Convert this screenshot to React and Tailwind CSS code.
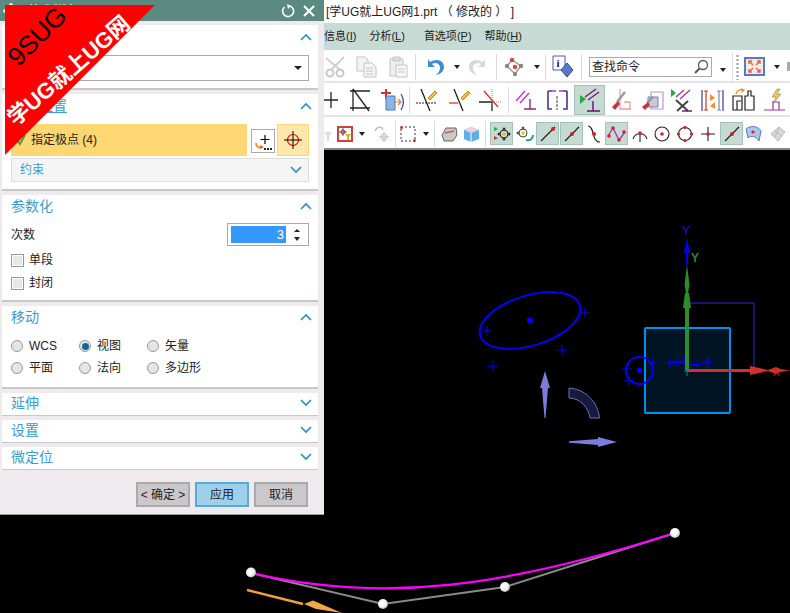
import React from 'react'

const Ico = ({ w = 22, h = 22, className = '', children }) => (
  <svg width={w} height={h} viewBox={`0 0 ${w} ${h}`} className={`shrink-0 ${className}`} fill="none">
    {children}
  </svg>
)

const Caret = ({ className = '' }) => (
  <span className={`shrink-0 w-0 h-0 border-x-[3px] border-x-transparent border-t-[4px] border-t-[#222] ${className}`} />
)

const Sep = ({ className = '' }) => <span className={`shrink-0 w-px h-[26px] bg-[#dcdcdc] ${className}`} />

const Active = ({ className = '', children }) => (
  <span className={`shrink-0 flex items-center justify-center bg-[#c5dad3] border border-[#a3c2ba] ${className}`}>
    {children}
  </span>
)

const Chevron = ({ up, className = '' }) => (
  <svg width="12" height="8" viewBox="0 0 12 8" className={`shrink-0 ${className}`} fill="none">
    <path d={up ? 'M1 7 L6 2 L11 7' : 'M1 1 L6 6 L11 1'} stroke="#2f8fb8" strokeWidth="1.7" />
  </svg>
)

const Radio = ({ label, on, className = '' }) => (
  <div className={`flex items-center gap-[6px] ${className}`}>
    <span className="w-3 h-3 rounded-full border border-[#999] bg-[#e4e4e4] flex items-center justify-center">
      {on && <span className="w-[7px] h-[7px] rounded-full bg-[#0a6a9a]" />}
    </span>
    <span className="text-xs text-[#222]">{label}</span>
  </div>
)

const Check = ({ label }) => (
  <div className="flex items-center gap-[5px] h-[14px]">
    <span className="w-[13px] h-[13px] border border-[#999] bg-[#e8e8e8] shadow-[inset_0_0_0_1px_#fff]" />
    <span className="text-xs text-[#222]">{label}</span>
  </div>
)

const Collapsed = ({ title }) => (
  <div className="ml-[2px] mr-[6px] mt-1 h-[23px] bg-white border-b border-[#c8c8c8] flex items-center justify-between pl-[9px] pr-[6px]">
    <span className="text-sm leading-none text-[#3c9ccb] -mt-[2px]">{title}</span>
    <Chevron className="-mt-[2px]" />
  </div>
)

const Footer = ({ children, className = '' }) => (
  <button className={`w-[54px] h-[25px] text-xs text-[#222] border-2 flex items-center justify-center ${className}`}>
    {children}
  </button>
)

const Dialog = () => (
  <div className="absolute left-0 top-0 w-[324px] h-[515px] bg-[#eeeaee] border-b border-[#999]">
    <div className="h-[21px] bg-[#5b8b80] flex items-center justify-between pl-[5px] pr-[9px]">
      <div className="flex items-center gap-[10px]">
        <span className="w-3 h-3 bg-[#dfe8e6] rotate-45" />
        <span className="text-[13px] text-white leading-none">艺术样条</span>
      </div>
      <div className="flex items-center gap-[8px]">
        <svg width="14" height="14" viewBox="0 0 14 14" fill="none">
          <path d="M9 2 A5.5 5.5 0 1 1 3.5 3" stroke="#fff" strokeWidth="1.6" />
          <path d="M6 0 L10 2 L7 5" fill="#fff" />
        </svg>
        <svg width="12" height="12" viewBox="0 0 12 12" fill="none">
          <path d="M1 1 L11 11 M11 1 L1 11" stroke="#fff" strokeWidth="2" />
        </svg>
      </div>
    </div>

    <div className="ml-[2px] mr-[6px] mt-1 h-[65px] bg-white border-b-2 border-[#c8c8c8] px-[9px] pt-[6px]">
      <div className="flex items-center justify-between h-[12px]">
        <span className="text-sm leading-none text-[#3c9ccb]">类型</span>
        <Chevron up className="-mr-[3px]" />
      </div>
      <div className="mt-[12px] h-[26px] border border-[#aaa] flex items-center justify-between pl-[4px] pr-[6px] text-xs">
        <span>根据极点</span>
        <Caret className="border-x-[4px] border-t-[4px]" />
      </div>
    </div>

    <div className="ml-[2px] mr-[6px] mt-1 h-[97px] bg-white border-b-2 border-[#c8c8c8] px-[9px] pt-[5px]">
      <div className="flex items-center justify-between h-[14px]">
        <span className="text-sm leading-none text-[#3c9ccb] underline">极点位置</span>
        <Chevron up className="-mr-[3px]" />
      </div>
      <div className="mt-[11px] flex items-stretch h-[32px]">
        <div className="w-[236px] bg-[#fed672] flex items-center pl-[5px] gap-[5px]">
          <svg width="10" height="12" viewBox="0 0 10 12" fill="none">
            <path d="M1 6 L4 10 L9 1" stroke="#3fa43f" strokeWidth="2" />
          </svg>
          <span className="text-xs text-[#222]">指定极点 (4)</span>
        </div>
        <div className="ml-1 mt-[5px] w-6 h-6 border border-[#aaa] bg-white shrink-0">
          <svg width="22" height="22" viewBox="0 0 22 22" fill="none">
            <path d="M13 5 V14 M8.5 9.5 H17.5" stroke="#000" strokeWidth="1.2" />
            <path d="M4 13 C4 18 8 18 10 17" stroke="#e8901c" strokeWidth="1.6" />
            <path d="M8 15 L12 17 L8 19Z" fill="#e8601c" />
            <path d="M12 18 h2 v2 h-2z M15 18 h2 v2 h-2z M18 18 h2 v2 h-2z" fill="#222" />
          </svg>
        </div>
        <div className="ml-[2px] w-[32px] bg-[#fee7a9] border border-[#fbd67c] flex items-center justify-center">
          <svg width="20" height="20" viewBox="0 0 20 20" fill="none">
            <circle cx="10" cy="10" r="5.5" stroke="#e01010" strokeWidth="1.2" />
            <path d="M10 1 V19 M1 10 H19" stroke="#000" strokeWidth="1" />
          </svg>
        </div>
      </div>
      <div className="mt-[2px] h-[24px] bg-[#f5f5f5] border border-[#ddd] flex items-center justify-between pl-[8px] pr-[6px]">
        <span className="text-xs text-[#3c9ccb]">约束</span>
        <Chevron />
      </div>
    </div>

    <div className="ml-[2px] mr-[6px] mt-1 h-[107px] bg-white border-b-2 border-[#c8c8c8] px-[9px] pt-[4px]">
      <div className="flex items-center justify-between h-[14px]">
        <span className="text-sm leading-none text-[#3c9ccb]">参数化</span>
        <Chevron up className="-mr-[3px]" />
      </div>
      <div className="mt-[10px] flex items-center justify-between h-[23px]">
        <span className="text-xs text-[#222]">次数</span>
        <div className="w-[82px] h-[23px] border border-[#aaa] flex items-center pl-[3px]">
          <div className="w-[55px] h-[17px] bg-[#3399ff] text-white text-[13px] leading-[17px] text-right pr-[2px]">3</div>
          <div className="flex-1 flex flex-col items-center gap-[5px]">
            <span className="w-0 h-0 border-x-[3px] border-x-transparent border-b-[3px] border-b-[#222]" />
            <Caret className="border-t-[3px]" />
          </div>
        </div>
      </div>
      <div className="mt-[7px] flex flex-col gap-[9px]">
        <Check label="单段" />
        <Check label="封闭" />
      </div>
    </div>

    <div className="ml-[2px] mr-[6px] mt-1 h-[83px] bg-white border-b-2 border-[#c8c8c8] px-[9px] pt-[4px]">
      <div className="flex items-center justify-between h-[14px]">
        <span className="text-sm leading-none text-[#3c9ccb]">移动</span>
        <Chevron up className="-mr-[3px]" />
      </div>
      <div className="mt-[14px] grid grid-cols-[68px_68px_1fr] gap-y-[6px]">
        <Radio label="WCS" />
        <Radio label="视图" on />
        <Radio label="矢量" />
        <Radio label="平面" />
        <Radio label="法向" />
        <Radio label="多边形" />
      </div>
    </div>

    <Collapsed title="延伸" />
    <Collapsed title="设置" />
    <Collapsed title="微定位" />

    <div className="mt-[12px] ml-[136px] flex gap-[5px]">
      <Footer className="bg-[#cbc8cb] border-[#aaa]">&lt; 确定 &gt;</Footer>
      <Footer className="bg-[#9fd0ea] border-[#5aa8dc]">应用</Footer>
      <Footer className="bg-[#cbc8cb] border-[#aaa]">取消</Footer>
    </div>

    {/* 水印 */}
    <div className="absolute left-[5px] top-[5px] w-[150px] h-[150px] bg-[#ff0000] [clip-path:polygon(0_0,100%_0,0_100%)]" />
    <span className="absolute left-[1px] top-[20px] w-[72px] text-center text-[26px] leading-[32px] text-black -rotate-45 font-['Liberation_Sans']">9SUG</span>
    <span className="absolute left-[-11px] top-[55px] w-[160px] text-center text-[22px] leading-[32px] font-bold text-white -rotate-[41deg] whitespace-nowrap">学UG就上UG网</span>
  </div>
)

const ToolRow1 = () => (
  <div className="h-[33px] flex items-center pl-[324px] pt-[2px] border-b-2 border-[#e4e4e4]">
    <Ico w={23} h={24}>
      <path d="M2 3 L15 14 M20 2 L8 14" stroke="#d0d0d0" strokeWidth="2" />
      <circle cx="6" cy="18" r="3.5" stroke="#c8c8c8" strokeWidth="2" />
      <circle cx="16" cy="18" r="3.5" stroke="#c8c8c8" strokeWidth="2" />
    </Ico>
    <Ico w={21} h={22} className="ml-[9px]">
      <path d="M1 1 H9 L12 4 V15 H1Z" fill="#f4f4f4" stroke="#c4c4c4" />
      <path d="M8 7 H16 L20 11 V21 H8Z" fill="#f4f4f4" stroke="#c4c4c4" />
      <path d="M10 12 H17 M10 15 H17 M10 18 H17" stroke="#c4c4c4" />
    </Ico>
    <Ico w={20} h={22} className="ml-[11px]">
      <path d="M2 3 H15 V20 H2Z" fill="#eee" stroke="#c4c4c4" />
      <path d="M5 1 H12 V5 H5Z" fill="#ddd" stroke="#c4c4c4" />
      <path d="M8 9 H19 V21 H8Z" fill="#f7f7f7" stroke="#c4c4c4" />
      <path d="M10 13 H17 M10 16 H17" stroke="#c4c4c4" />
    </Ico>
    <Sep className="ml-[7px]" />
    <Ico w={20} h={20} className="ml-[9px]">
      <path d="M3 2 V10 H10 L7 7 C10 5 15 6 15 11 C15 14 13 16 11 18 C16 17 19 14 19 10 C19 3 11 1 5 5Z" fill="#3d8bd4" />
    </Ico>
    <Caret className="ml-[9px]" />
    <Ico w={20} h={20} className="ml-[8px]">
      <path d="M17 2 V10 H10 L13 7 C10 5 5 6 5 11 C5 14 7 16 9 18 C4 17 1 14 1 10 C1 3 9 1 15 5Z" fill="#d8d8d8" />
    </Ico>
    <Sep className="ml-[8px]" />
    <Ico w={21} h={20} className="ml-[7px]">
      <path d="M3 9 L8 3 L17 9 L11 17Z" stroke="#999" strokeWidth="1.4" />
      <circle cx="8" cy="3" r="2.2" fill="#e04040" />
      <circle cx="3" cy="9" r="2.2" fill="#888" />
      <circle cx="17" cy="9" r="2.2" fill="#888" />
      <circle cx="11" cy="17" r="2.2" fill="#888" />
      <circle cx="11" cy="10" r="2.2" fill="#e04040" />
    </Ico>
    <Caret className="ml-[9px]" />
    <Sep className="ml-[5px]" />
    <Ico w={22} h={24} className="ml-[6px]">
      <path d="M1 1 H13 V15 H1Z" fill="#fff" stroke="#4a5aa8" />
      <text x="4.5" y="12" fontSize="11" fontWeight="700" fontFamily="Liberation Serif" fill="#223">i</text>
      <path d="M15 8 L21 15 L15 22 L9 15Z" fill="#5a78c8" stroke="#34498c" />
    </Ico>
    <Sep className="ml-[7px]" />
    <div className="ml-[7px] w-[125px] h-[20px] border border-[#aaa] flex items-center justify-between pl-[2px] pr-[2px]">
      <span className="text-xs leading-none text-[#222]">查找命令</span>
      <svg width="16" height="16" viewBox="0 0 16 16" fill="none">
        <circle cx="10" cy="6" r="4.5" stroke="#555" strokeWidth="1.3" />
        <path d="M6.5 9.5 L2 14" stroke="#555" strokeWidth="2" />
      </svg>
    </div>
    <Caret className="ml-[8px] mt-[7px]" />
    <div className="ml-[6px] w-px h-[29px] bg-[#e0e0e0]" />
    <Ico w={3} h={26} className="ml-[3px]">
      <path d="M1.5 1 V26" stroke="#999" strokeWidth="2" strokeDasharray="2 2" />
    </Ico>
    <div className="ml-[5px] w-[21px] h-[19px] border-2 border-[#5a78c8] bg-[#f2ece6] shrink-0 flex items-center justify-center">
      <svg width="13" height="13" viewBox="0 0 13 13" fill="none">
        <path d="M1 4 V1 H4 M9 1 H12 V4 M12 9 V12 H9 M4 12 H1 V9 M1 1 L5 5 M12 1 L8 5 M12 12 L8 8 M1 12 L5 8" stroke="#e8603c" strokeWidth="1.4" />
      </svg>
    </div>
    <Caret className="ml-[9px]" />
    <span className="ml-[7px] w-[3px] h-[9px] bg-[#aaa] shrink-0" />
  </div>
)

const ToolRow2 = () => (
  <div className="h-[34px] flex items-center pl-[324px] pt-[2px] border-b-2 border-[#e4e4e4] overflow-hidden">
    <Ico w={15} h={22}>
      <path d="M7 3 V19 M0 11 H14" stroke="#222" strokeWidth="1.3" />
    </Ico>
    <Ico w={22} h={24} className="ml-[10px]">
      <path d="M1 3 H21 M1 20 H21 M4 1 L20 23" stroke="#222" strokeWidth="1.3" />
      <path d="M4 1 V23" stroke="#222" strokeWidth="1.3" />
    </Ico>
    <Ico w={24} h={24} className="ml-[9px]">
      <path d="M6 1 V11 M1 5 H11" stroke="#d83030" strokeWidth="2" />
      <path d="M6 8 H15 V22 H6Z" fill="#8fb4e0" stroke="#4a78b8" />
      <path d="M15 14 H20 M18 11 L21 14 L18 17" stroke="#e88020" strokeWidth="1.2" />
      <path d="M21 6 C24 11 24 17 21 22" stroke="#3a3aa8" strokeWidth="1.2" />
    </Ico>
    <Sep className="ml-[5px]" />
    <Ico w={22} h={24} className="ml-[6px]">
      <path d="M5 1 L14 23" stroke="#222" strokeWidth="1.3" />
      <path d="M0 15 H20" stroke="#222" strokeDasharray="2 1" />
      <path d="M12 10 L19 3 L21 5 L14 12Z" fill="#f0c040" stroke="#c88020" />
    </Ico>
    <Ico w={22} h={24} className="ml-[11px]">
      <path d="M5 1 L14 23" stroke="#222" strokeWidth="1.3" />
      <path d="M0 15 H9" stroke="#d83030" strokeWidth="1.3" />
      <path d="M12 10 L19 3 L21 5 L14 12Z" fill="#f0c040" stroke="#c88020" />
    </Ico>
    <Ico w={22} h={24} className="ml-[8px]">
      <path d="M13 14 V23 M0 14 H13" stroke="#222" strokeWidth="1.3" />
      <path d="M13 1 V14 M13 14 H22" stroke="#888" strokeDasharray="1 1" />
      <path d="M5 3 L19 19" stroke="#e03030" strokeWidth="1.4" />
    </Ico>
    <Sep className="ml-[7px]" />
    <Ico w={22} h={22} className="ml-[6px]">
      <path d="M1 12 L10 2 M5 14 L14 4" stroke="#c832c8" strokeWidth="1.4" />
      <path d="M9 20 H21 M15 10 V20" stroke="#8a2a8a" strokeWidth="1.4" />
    </Ico>
    <Ico w={23} h={24} className="ml-[9px]">
      <path d="M2 3 V21 H6 M2 3 H6 M21 3 V21 H17 M21 3 H17" stroke="#3a3a98" strokeWidth="1.6" />
      <path d="M11 8 V22" stroke="#444" strokeDasharray="3 1" />
      <path d="M6 3 L10 3 M13 3 L17 3" stroke="#c030c0" strokeWidth="1.4" />
    </Ico>
    <Active className="ml-[5px] w-[31px] h-[30px]">
      <Ico w={24} h={24}>
        <path d="M2 7 L8 11 L2 16Z" fill="#22aa44" />
        <path d="M7 9 L18 1 M10 12 L21 4" stroke="#7a1a7a" strokeWidth="1.4" />
        <path d="M9 23 H22 M15 13 V23" stroke="#6a0f6a" strokeWidth="1.4" />
      </Ico>
    </Active>
    <Ico w={22} h={24} className="ml-[5px]">
      <path d="M10 1 V21 H21 M14 14 H20 V21" stroke="#e8a0a0" strokeWidth="1.3" />
      <path d="M15 4 L7 14" stroke="#999" strokeWidth="2.4" />
      <path d="M8 13 L2 19 L5 22 L10 16Z" fill="#cc3040" />
    </Ico>
    <Ico w={24} h={24} className="ml-[8px]">
      <path d="M11 4 H23 V21 H11Z" stroke="#c090d8" strokeWidth="1.2" />
      <path d="M8 9 H18 V19 H8Z" fill="#c8c8d8" stroke="#7a7ab8" />
      <path d="M13 9 L7 15" stroke="#999" strokeWidth="2.4" />
      <path d="M8 14 L2 19 L5 22 L10 17Z" fill="#cc3040" />
    </Ico>
    <Ico w={23} h={24} className="ml-[6px]">
      <path d="M1 1 L6 5 L1 9Z" fill="#22aa44" />
      <path d="M6 9 L14 2 M10 11 L20 2" stroke="#9a3a9a" strokeWidth="1.4" />
      <path d="M6 12 L18 23 M18 13 L7 23" stroke="#444" strokeWidth="2" />
      <path d="M12 23 H22" stroke="#6a0f6a" strokeWidth="1.4" />
    </Ico>
    <Ico w={23} h={24} className="ml-[8px]">
      <path d="M1 2 V23 M22 2 V23" stroke="#3a3a98" strokeWidth="1.2" />
      <path d="M5 3 V22 M3 3 H7 M3 22 H7" stroke="#d83030" strokeWidth="1.2" />
      <path d="M9 6 L14 10 L9 13Z M14 14 L9 18 L14 21Z" fill="#f09030" />
      <path d="M18 3 V22 M16 3 H20 M16 22 H20" stroke="#888" strokeWidth="1.2" />
    </Ico>
    <Ico w={23} h={24} className="ml-[8px]">
      <path d="M1 8 H10 V22 H1Z M13 22 V8 H16 V3 H19 V8 H22 V22Z M5 22 V13 H9" stroke="#222" strokeWidth="1.2" />
      <path d="M4 6 C5 2 9 1 11 2" stroke="#e89030" strokeWidth="1.4" />
      <path d="M9 0 L13 2 L10 5Z" fill="#e89030" />
    </Ico>
    <Ico w={22} h={24} className="ml-[9px]">
      <path d="M0 22 H21 M9 13 V22 H15 V14 H9" stroke="#a030a0" strokeWidth="1.2" />
      <path d="M13 1 L8 9 H12 L9 16 L17 6 H13 L16 1Z" fill="#f0c850" stroke="#888" strokeWidth="0.6" />
    </Ico>
  </div>
)

const ToolRow3 = () => (
  <div className="h-[33px] flex items-center pl-[324px] pt-[2px] border-b-2 border-[#888] overflow-hidden">
    <Ico w={8} h={16}>
      <path d="M0 6 H8 L5 10 V15 H3 V10Z" fill="#ddd" />
    </Ico>
    <div className="ml-[5px] w-4 h-[16px] border-2 border-[#d04040] flex items-center justify-center shrink-0">
      <svg width="12" height="12" viewBox="0 0 12 12" fill="none">
        <circle cx="4" cy="4" r="2" stroke="#a02020" />
        <path d="M4 0 V8 M0 4 H8" stroke="#444" strokeWidth="0.8" />
        <path d="M6 6 H12 L10 9 V12 H8 V9Z" fill="#e8b020" />
      </svg>
    </div>
    <Caret className="ml-[6px]" />
    <Ico w={16} h={18} className="ml-[8px]">
      <path d="M2 6 C4 1 9 1 10 5" stroke="#bbb" strokeWidth="1.2" />
      <path d="M11 7 V17 M6 12 H16" stroke="#bbb" />
      <circle cx="11" cy="12" r="3" stroke="#bbb" />
    </Ico>
    <Sep className="ml-[6px]" />
    <Ico w={16} h={16} className="ml-[4px]">
      <path d="M1 1 H15 V15 H1Z" stroke="#333" strokeDasharray="2 2" />
      <circle cx="1.5" cy="1.5" r="1.5" fill="#d83030" />
      <circle cx="14.5" cy="14.5" r="1.5" fill="#d83030" />
    </Ico>
    <Caret className="ml-[7px]" />
    <Sep className="ml-[5px]" />
    <Ico w={17} h={16} className="ml-[6px]">
      <path d="M1 9 L5 2 H15 L16 9 L12 15 H3Z" fill="#c8c8c8" stroke="#666" />
      <path d="M4 7 L13 5" stroke="#e05050" strokeWidth="1.4" />
    </Ico>
    <Ico w={17} h={16} className="ml-[5px]">
      <path d="M1 4 L8 1 L16 4 V13 L8 16 L1 13Z" fill="#5ab0e8" />
      <path d="M1 4 L8 7 L16 4 L8 1Z" fill="#f0d0d0" />
      <path d="M8 7 V16" stroke="#fff" />
    </Ico>
    <Sep className="ml-[5px]" />
    <Active className="ml-[4px] w-[23px] h-[23px]">
      <Ico w={18} h={18}>
        <path d="M1 2 L5 4 L1 6Z" fill="#22aa44" />
        <path d="M1 11 L5 13 L1 15Z" fill="#d83030" />
        <circle cx="11" cy="9" r="4" stroke="#222" />
        <circle cx="11" cy="9" r="1.8" fill="#e8c020" />
        <circle cx="11" cy="4" r="1.5" fill="#333" />
        <circle cx="11" cy="14" r="1.5" fill="#333" />
        <circle cx="6" cy="9" r="1.5" fill="#333" />
        <circle cx="16" cy="9" r="1.5" fill="#333" />
      </Ico>
    </Active>
    <Ico w={19} h={18} className="ml-[3px]">
      <circle cx="7" cy="8" r="4" stroke="#444" />
      <circle cx="7" cy="8" r="1.8" fill="#e8c020" />
      <circle cx="7" cy="3" r="1.5" fill="#555" />
      <circle cx="2" cy="8" r="1.5" fill="#555" />
      <path d="M10 15 C14 16 17 14 17 10" stroke="#2a9a9a" strokeWidth="2" />
    </Ico>
    <Active className="ml-[1px] w-[23px] h-[23px]">
      <Ico w={16} h={16}>
        <path d="M1 15 L15 1" stroke="#222" strokeWidth="1.2" />
        <circle cx="13" cy="3" r="2" fill="#d82020" />
      </Ico>
    </Active>
    <Active className="ml-px w-[23px] h-[23px]">
      <Ico w={16} h={16}>
        <path d="M1 15 L15 1" stroke="#222" strokeWidth="1.2" />
        <circle cx="8" cy="8" r="2" fill="#d82020" />
      </Ico>
    </Active>
    <Ico w={14} h={18} className="ml-[4px]">
      <path d="M1 1 C8 1 4 17 13 17" stroke="#222" strokeWidth="1.2" />
      <circle cx="7" cy="9" r="2" fill="#d82020" />
    </Ico>
    <Active className="ml-[4px] w-[23px] h-[23px]">
      <Ico w={19} h={18}>
        <path d="M1 11 L6 3 L12 15 L18 7" stroke="#a030c0" strokeWidth="1.3" />
        <circle cx="2" cy="11" r="1.8" fill="#d82020" />
        <circle cx="6" cy="3" r="1.8" fill="#d82020" />
        <circle cx="12" cy="15" r="1.8" fill="#d82020" />
        <circle cx="17" cy="7" r="1.8" fill="#d82020" />
      </Ico>
    </Active>
    <Ico w={16} h={16} className="ml-[4px]">
      <path d="M1 13 C3 6 13 6 15 13 M8 6 V16" stroke="#222" strokeWidth="1.1" />
      <circle cx="8" cy="7" r="1.8" fill="#d82020" />
    </Ico>
    <Ico w={16} h={16} className="ml-[6px]">
      <circle cx="8" cy="8" r="7" stroke="#222" strokeWidth="1.1" />
      <circle cx="8" cy="8" r="1.8" fill="#d82020" />
    </Ico>
    <Ico w={16} h={16} className="ml-[7px]">
      <circle cx="8" cy="8" r="6.5" stroke="#222" strokeWidth="1.1" />
      <circle cx="8" cy="1.5" r="1.6" fill="#d82020" />
      <circle cx="1.5" cy="8" r="1.6" fill="#d82020" />
      <circle cx="14.5" cy="8" r="1.6" fill="#d82020" />
      <circle cx="8" cy="14.5" r="1.6" fill="#d82020" />
    </Ico>
    <Ico w={14} h={16} className="ml-[8px]">
      <path d="M7 1 V15 M0 8 H14" stroke="#222" strokeWidth="1.1" />
      <circle cx="7" cy="8" r="1.8" fill="#d82020" />
    </Ico>
    <Active className="ml-[5px] w-[23px] h-[23px]">
      <Ico w={16} h={16}>
        <path d="M1 15 L15 1" stroke="#222" strokeWidth="1.2" />
        <circle cx="8" cy="8" r="2" fill="#d82020" />
      </Ico>
    </Active>
    <Ico w={17} h={17} className="ml-[2px]">
      <path d="M1 4 C6 0 13 1 16 6 L14 16 C11 11 6 10 3 13Z" fill="#a8c8e8" stroke="#5a78b8" />
      <circle cx="8" cy="7" r="1.6" fill="#d82020" />
    </Ico>
    <Ico w={16} h={16} className="ml-[8px]">
      <path d="M1 8 L9 1 L15 6 L8 15Z" fill="#d8d8d8" stroke="#bbb" />
      <path d="M5 5 L12 10 M9 1 L5 11" stroke="#bbb" />
    </Ico>
  </div>
)

const Viewport = () => (
  <div className="h-[463px] bg-black overflow-hidden">
    <svg width="790" height="463" viewBox="0 150 790 463" fill="none">
      <defs>
        <radialGradient id="ball" cx="0.4" cy="0.4" r="0.7">
          <stop offset="0" stopColor="#fff" />
          <stop offset="0.6" stopColor="#f0f0f0" />
          <stop offset="1" stopColor="#8a8a8a" />
        </radialGradient>
      </defs>

      <ellipse cx="530" cy="320.5" rx="52" ry="25" transform="rotate(-17 530 320.5)" stroke="#0000ff" strokeWidth="2" />
      <circle cx="530" cy="320.5" r="3" fill="#0000ff" />
      <path d="M580 313 H590 M585 308 V318 M482 331 H492 M487 326 V336 M557 350 H567 M562 345 V355 M488 366 H498 M493 361 V371" stroke="#0000ff" />

      <path d="M690 303 H754 V367" stroke="#2a2ad8" />
      <rect x="645" y="328" width="85" height="85" rx="1" fill="#001423" stroke="#0090f0" strokeWidth="2" />

      <circle cx="639.5" cy="370.5" r="13.5" stroke="#0000ff" strokeWidth="2" />
      <circle cx="639.5" cy="370.5" r="2.8" fill="#0000ff" />
      <path d="M622 369 H632 M627 364 V374 M624 381 H634 M629 376 V386 M648 363 H658 M653 358 V368" stroke="#0000ff" />
      <path d="M668 364 C678 359 690 367 698 365 C703 364 707 362 710 359" stroke="#0000ff" strokeWidth="1.6" />
      <path d="M665 363 H675 M670 358 V368 M672 362 H682 M677 357 V367 M679 361 H689 M684 356 V366 M692 365 H702 M697 360 V370 M703 363 H713 M708 358 V368" stroke="#0000ff" />

      <path d="M687 238 L690 253 H688 V265 H686 V253 H684Z" fill="#0000f0" />
      <text x="682" y="235" fontSize="12" fill="#1414e8" fontFamily="Liberation Sans">Y</text>
      <text x="691" y="262" fontSize="12" fontWeight="700" fill="#2a8a2a" fontFamily="Liberation Sans">Y</text>
      <path d="M685 370 V308 H683 L685 293 H686 L684.5 285 L687 265 L689.5 285 L688 293 H689 L691 308 H689 V370Z" fill="#2e8b2e" />
      <path d="M687 369 H750 V366 L768 370 L776 367 L780 369 L790 370.5 L780 372 L776 374 L768 371 L750 375 V372 H687Z" fill="#cf3030" />
      <text x="773" y="376" fontSize="10" fill="#e02020" fontFamily="Liberation Sans">X</text>
      <path d="M684 371 H690 M687 368 V376" stroke="#138a9a" />

      <path d="M545 371 L550 388 H548 L545.5 418 H544.5 L542 388 H540Z" fill="#7c7cdc" />
      <path d="M617 442 L598 447 V445 L569 442.7 V441.3 L598 439 V437Z" fill="#7c7cdc" />
      <path d="M569 388 C585 389 598 402 599.5 418 H590 C589 408 580 398 569 398Z" fill="#181a3c" stroke="#6c6cc8" />

      <path d="M247 590 L303 604" stroke="#f0a040" strokeWidth="2.5" />
      <path d="M304 604 L313 600.5 L342 613 L316 609Z" fill="#f0a848" />
      <path d="M251 573 L383 604 L505 587 L675 533" stroke="#8a8a8a" strokeWidth="2" />
      <path d="M251 573 C383 604 505 587 675 533" stroke="#ff00ff" strokeWidth="2.2" />
      <circle cx="251" cy="572.5" r="5" fill="url(#ball)" />
      <circle cx="383" cy="604" r="5" fill="url(#ball)" />
      <circle cx="505" cy="587" r="5" fill="url(#ball)" />
      <circle cx="675" cy="533" r="5" fill="url(#ball)" />
    </svg>
  </div>
)

const Menu = ({ label, hot, className = '' }) => (
  <span className={`text-[11px] text-[#222] ${className}`}>
    {label}(<span className="underline">{hot}</span>)
  </span>
)

export default function App() {
  return (
    <div className="relative w-[790px] h-[613px] overflow-hidden bg-white font-['Liberation_Sans','Noto_Sans_CJK_SC',sans-serif]">
      <div className="h-[23px] pl-[326px] flex items-center text-xs text-[#222] whitespace-pre">[学UG就上UG网1.prt （ 修改的 ） ]</div>
      <div className="h-[27px] bg-[#c7dbd5] pl-[324px] flex items-center">
        <Menu label="信息" hot="I" />
        <Menu label="分析" hot="L" className="ml-[13px]" />
        <Menu label="首选项" hot="P" className="ml-[19px]" />
        <Menu label="帮助" hot="H" className="ml-[13px]" />
      </div>
      <ToolRow1 />
      <ToolRow2 />
      <ToolRow3 />
      <Viewport />
      <Dialog />
    </div>
  )
}
